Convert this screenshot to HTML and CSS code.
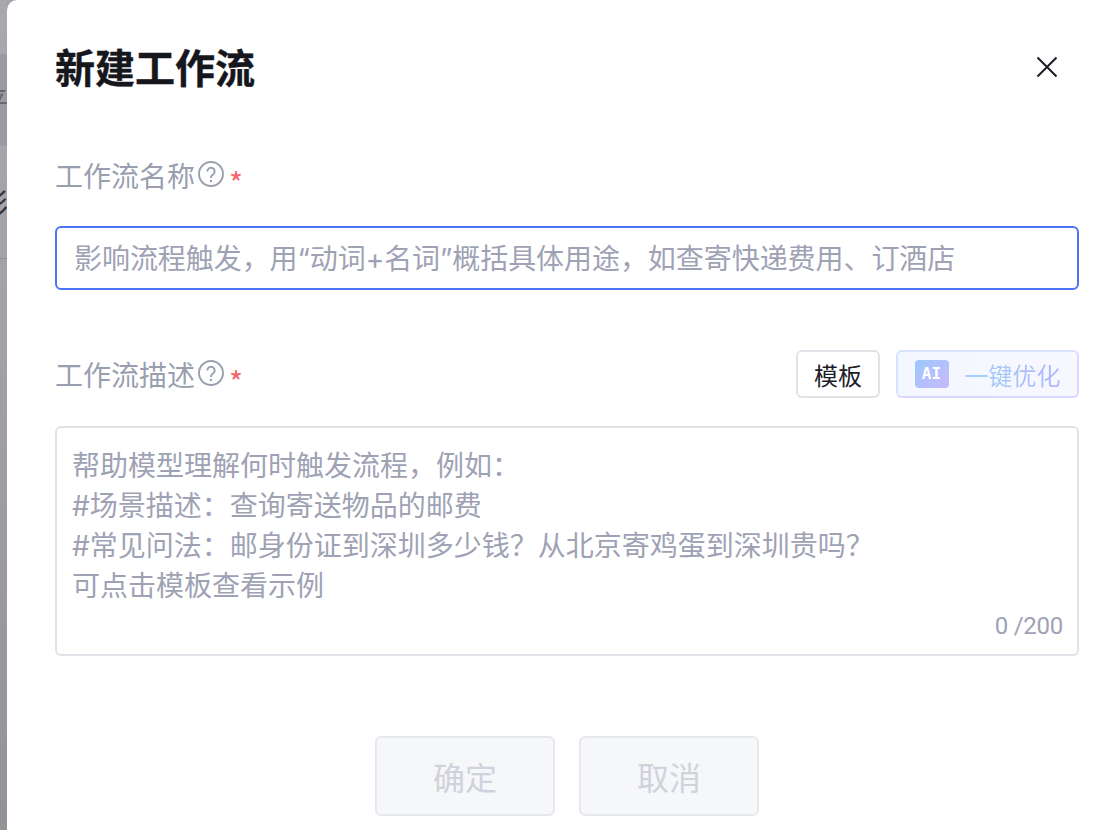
FILE: index.html
```html
<!DOCTYPE html>
<html lang="zh-CN">
<head>
    <meta charset="UTF-8">
    <title>新建工作流</title>
    <link rel="stylesheet" href="styles.css">
</head>
<body>
    <div class="backdrop">
        <div class="bg-band"></div>
        <span class="bg-text bg-text-a">平</span>
        <span class="bg-text bg-text-b">彩</span>
        <div class="bg-line"></div>
    </div>
    <div class="modal">
        <header class="modal-head">
            <h1>新建工作流</h1>
            <svg class="close" width="22" height="22" viewBox="0 0 22 22"><path d="M1.5 1.5L20.5 20.5M20.5 1.5L1.5 20.5" stroke="#1d1d26" stroke-width="2" fill="none"/></svg>
        </header>

        <div class="field-label name-label">
            <span>工作流名称</span>
            <svg class="help" width="26" height="26" viewBox="0 0 26 26"><circle cx="13" cy="13" r="12" fill="none" stroke="#9a9fb0" stroke-width="1.9"/><path d="M9.3 10.4a3.7 3.7 0 1 1 5.9 3c-1.3.9-2.2 1.4-2.2 3v.6" fill="none" stroke="#9a9fb0" stroke-width="1.9"/><circle cx="13" cy="20" r="1.2" fill="#9a9fb0"/></svg>
            <span class="req">*</span>
        </div>
        <div class="name-input">影响流程触发，用“动词+名词”概括具体用途，如查寄快递费用、订酒店</div>

        <div class="desc-row">
            <div class="field-label">
                <span>工作流描述</span>
                <svg class="help" width="26" height="26" viewBox="0 0 26 26"><circle cx="13" cy="13" r="12" fill="none" stroke="#9a9fb0" stroke-width="1.9"/><path d="M9.3 10.4a3.7 3.7 0 1 1 5.9 3c-1.3.9-2.2 1.4-2.2 3v.6" fill="none" stroke="#9a9fb0" stroke-width="1.9"/><circle cx="13" cy="20" r="1.2" fill="#9a9fb0"/></svg>
                <span class="req">*</span>
            </div>
            <div class="desc-actions">
                <button class="btn-template">模板</button>
                <button class="btn-ai"><span class="ai-badge">AI</span><span class="ai-text">一键优化</span></button>
            </div>
        </div>
        <div class="desc-input">
            <p>帮助模型理解何时触发流程，例如：</p>
            <p>#场景描述：查询寄送物品的邮费</p>
            <p>#常见问法：邮身份证到深圳多少钱？从北京寄鸡蛋到深圳贵吗？</p>
            <p>可点击模板查看示例</p>
            <div class="counter">0 /200</div>
        </div>

        <footer class="modal-foot">
            <button class="btn-off">确定</button>
            <button class="btn-off">取消</button>
        </footer>
    </div>
</body>
</html>
```

FILE: styles.css
```css
* {
    box-sizing: border-box;
}
html, body {
    height: 100%;
}
body {
    margin: 0;
    overflow: hidden;
    background-color: #a3a3a8;
    font-family: "Noto Sans CJK SC", "Inter", sans-serif;
}
.backdrop {
    position: absolute;
    left: 0;
    top: 0;
    width: 7px;
    height: 100%;
    overflow: hidden;
    background: linear-gradient(#a9a9ad, #9f9fa4 50%, #939397);
}
.bg-band {
    position: absolute;
    top: 54px;
    left: 0;
    width: 100%;
    height: 92px;
    background-color: #9a9aa1;
}
.bg-text {
    position: absolute;
    left: -20px;
    font-size: 28px;
    line-height: 32px;
}
.bg-text-a {
    top: 84px;
    color: #66666c;
}
.bg-text-b {
    top: 186px;
    color: #333338;
}
.bg-line {
    position: absolute;
    top: 258px;
    left: 0;
    width: 100%;
    height: 1px;
    background-color: #8f8f94;
}
.modal {
    position: absolute;
    left: 7px;
    top: 0;
    right: 0;
    bottom: 0;
    padding: 0 38px 0 48px;
    background-color: #fff;
    border-top-left-radius: 10px;
    display: flex;
    flex-direction: column;
}
.modal-head {
    display: flex;
    justify-content: space-between;
    align-items: center;
    height: 136px;
    flex: none;
}
.modal-head h1 {
    margin: 0;
    font-size: 40px;
    line-height: 48px;
    font-weight: 700;
    color: #16161d;
    -webkit-text-stroke: 0.4px #16161d;
    position: relative;
    top: -2px;
}
.close {
    margin-right: 21px;
    position: relative;
    top: -1px;
}
.field-label {
    display: flex;
    align-items: center;
    font-size: 28px;
    line-height: 40px;
    color: #9a9fb0;
}
.name-label {
    height: 40px;
    margin-top: 19px;
    margin-bottom: 31px;
}
.help {
    margin-left: 3px;
    position: relative;
    top: -1px;
}
.req {
    margin-left: 5px;
    font-size: 30px;
    color: #f4656b;
    line-height: 30px;
    position: relative;
    top: 7px;
}
.name-input {
    height: 64px;
    flex: none;
    padding: 2px 0 0 17px;
    border: 2px solid #4d74f5;
    border-radius: 6px;
    font-family: "Inter", "Noto Sans CJK SC", sans-serif;
    font-size: 28px;
    line-height: 58px;
    letter-spacing: -0.06px;
    color: #9ea2b4;
}
.desc-row {
    display: flex;
    justify-content: space-between;
    align-items: center;
    margin-top: 60px;
    height: 48px;
    flex: none;
}
.desc-actions {
    display: flex;
    gap: 16px;
}
button {
    font-family: inherit;
    padding: 0;
    height: 48px;
    border-radius: 6px;
}
.btn-template {
    width: 84px;
    background-color: #fff;
    border: 2px solid #e1e2e8;
    font-size: 24px;
    color: #1d1d26;
}
.btn-ai {
    width: 183px;
    display: flex;
    align-items: center;
    justify-content: center;
    gap: 16px;
    border: 2px solid;
    border-color: #d8e4ff #d8d8ff #d8d8ff #d8e4ff;
    background: linear-gradient(90deg, #f3f7ff, #f8f8ff);
}
.ai-badge {
    width: 34px;
    height: 28px;
    border-radius: 4px;
    background: linear-gradient(135deg, #9ec8fd, #c6b9fc);
    color: #fff;
    font-family: "DejaVu Sans Mono", monospace;
    font-size: 16px;
    font-weight: 700;
    line-height: 28px;
    text-align: center;
}
.ai-text {
    font-size: 24px;
    background: linear-gradient(90deg, #9fd0fb, #b0b6fc);
    -webkit-background-clip: text;
    background-clip: text;
    color: transparent;
}
.desc-input {
    margin-top: 28px;
    height: 230px;
    flex: none;
    padding: 18px 15px 0;
    border: 2px solid #e1e2e8;
    border-radius: 6px;
    font-family: "Inter", "Noto Sans CJK SC", sans-serif;
    font-size: 28px;
    line-height: 40px;
    color: #9ea2b4;
    position: relative;
}
.desc-input p {
    margin: 0;
}
.counter {
    position: absolute;
    right: 14px;
    bottom: 13px;
    font-family: "Roboto", sans-serif;
    font-size: 24px;
    line-height: 30px;
    letter-spacing: -0.25px;
    color: #9ea2b4;
}
.modal-foot {
    display: flex;
    justify-content: center;
    gap: 24px;
    margin-top: 80px;
}
.btn-off {
    width: 180px;
    height: 80px;
    background-color: #f6f7f9;
    border: 2px solid #e6e8ee;
    font-size: 32px;
    color: #d0d2dc;
}
```
